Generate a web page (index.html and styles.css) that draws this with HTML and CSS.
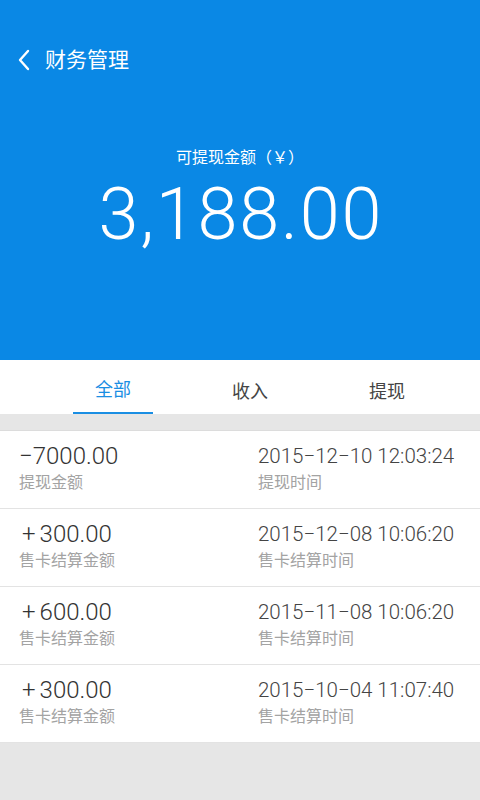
FILE: index.html
```html
<!DOCTYPE html>
<html lang="zh">
<head>
<meta charset="utf-8">
<link rel="stylesheet" href="styles.css">
</head>
<body>
<div class="page">
  <header class="hero">
    <div class="topbar">
      <svg class="back" width="14" height="22" viewBox="0 0 14 22"><path d="M11 2 L3 11 L11 20" fill="none" stroke="#fff" stroke-width="2.4" stroke-linecap="round" stroke-linejoin="round"/></svg>
      <span class="title">财务管理</span>
    </div>
    <div class="balance">
      <div class="balance-label">可提现金额（￥）</div>
      <div class="balance-value">3,188.00</div>
    </div>
  </header>
  <nav class="tabs">
    <div class="tab active">全部</div>
    <div class="tab">收入</div>
    <div class="tab">提现</div>
  </nav>
  <div class="list">
    <div class="row">
      <div class="col"><div class="amount">−7000.00</div><div class="label">提现金额</div></div>
      <div class="col right"><div class="time">2015−12−10 12:03:24</div><div class="label">提现时间</div></div>
    </div>
    <div class="row">
      <div class="col"><div class="amount"><span class="plus">+</span>300.00</div><div class="label">售卡结算金额</div></div>
      <div class="col right"><div class="time">2015−12−08 10:06:20</div><div class="label">售卡结算时间</div></div>
    </div>
    <div class="row">
      <div class="col"><div class="amount"><span class="plus">+</span>600.00</div><div class="label">售卡结算金额</div></div>
      <div class="col right"><div class="time">2015−11−08 10:06:20</div><div class="label">售卡结算时间</div></div>
    </div>
    <div class="row">
      <div class="col"><div class="amount"><span class="plus">+</span>300.00</div><div class="label">售卡结算金额</div></div>
      <div class="col right"><div class="time">2015−10−04 11:07:40</div><div class="label">售卡结算时间</div></div>
    </div>
  </div>
</div>
</body>
</html>
```
FILE: styles.css
```css
html, body {
  margin: 0;
  padding: 0;
}
body {
  width: 480px;
  height: 800px;
  background: #e6e6e6;
  font-family: Roboto, "Noto Sans CJK SC", sans-serif;
  overflow: hidden;
}
.hero {
  background: #0a88e5;
  height: 360px;
  color: #fff;
}
.topbar {
  height: 118px;
  display: flex;
  align-items: flex-start;
  padding: 47px 0 0 17px;
  box-sizing: border-box;
}
.back {
  margin-top: 2px;
}
.title {
  margin-left: 14px;
  font-size: 21px;
  line-height: 26px;
  font-weight: 400;
}
.balance {
  display: flex;
  flex-direction: column;
  align-items: center;
  margin-top: 29px;
}
.balance-label {
  font-size: 16px;
  line-height: 22px;
}
.balance-value {
  font-size: 72px;
  font-weight: 300;
  line-height: 80px;
  margin-top: 6px;
  letter-spacing: 1.75px;
  padding-left: 1.75px;
}
.tabs {
  background: #fff;
  height: 54px;
  display: flex;
  gap: 57px;
  padding-left: 73px;
  box-sizing: border-box;
}
.tab {
  width: 80px;
  font-size: 18px;
  color: #444;
  display: flex;
  align-items: center;
  justify-content: center;
  height: 54px;
  box-sizing: border-box;
  padding-top: 5px;
}
.tab.active {
  color: #1a8ee3;
  border-bottom: 2px solid #1a8ee3;
  padding-top: 3px;
}
.list {
  margin-top: 16px;
  border-top: 1px solid #dcdcdc;
}
.row {
  background: #fff;
  height: 77px;
  display: flex;
  border-bottom: 1px solid #e3e3e3;
}
.col {
  padding: 10px 0 0 19px;
  width: 239px;
  box-sizing: border-box;
}
.col.right {
  padding-left: 19px;
}
.amount {
  font-size: 24px;
  line-height: 30px;
  color: #333;
  font-weight: 300;
}
.plus {
  display: inline-block;
  padding-left: 3px;
  margin-right: 4px;
}
.time {
  font-size: 20.5px;
  line-height: 30px;
  color: #444;
  font-weight: 300;
}
.label {
  font-size: 16px;
  line-height: 22px;
  color: #a3a3a3;
  margin-top: 1px;
}
```
